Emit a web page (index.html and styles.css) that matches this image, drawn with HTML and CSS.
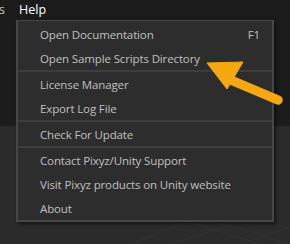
FILE: index.html
```html
<!DOCTYPE html>
<html>
<head>
<meta charset="utf-8">
<link rel="stylesheet" href="styles.css">
</head>
<body>
<div class="app">
  <div class="menubar">
    <span class="menu-item cut">s</span>
    <span class="menu-item active">Help</span>
  </div>
  <div class="panel"></div>
  <div class="viewport">
    <svg class="grid" width="290" height="117" viewBox="0 0 290 117">
      <g stroke="#333333" stroke-width="1" fill="none">
        <line x1="130" y1="117" x2="200" y2="90"/>
        <line x1="200" y1="90" x2="290" y2="117"/>
        <line x1="240" y1="117" x2="290" y2="100"/>
        <line x1="170" y1="117" x2="230" y2="98"/>
        <line x1="190" y1="95" x2="260" y2="117"/>
      </g>
    </svg>
  </div>

  <div class="dropdown">
    <div class="row"><span>Open Documentation</span><span class="key">F1</span></div>
    <div class="row"><span>Open Sample Scripts Directory</span></div>
    <div class="sep"></div>
    <div class="row"><span>License Manager</span></div>
    <div class="row"><span>Export Log File</span></div>
    <div class="sep"></div>
    <div class="row"><span>Check For Update</span></div>
    <div class="sep"></div>
    <div class="row"><span>Contact Pixyz/Unity Support</span></div>
    <div class="row"><span>Visit Pixyz products on Unity website</span></div>
    <div class="row"><span>About</span></div>
  </div>

  <svg class="arrow" width="290" height="244" viewBox="0 0 290 244">
    <g fill="#f5a812" stroke="#f5a812">
      <line x1="226" y1="78" x2="278" y2="100" stroke-width="9.5" stroke-linecap="round"/>
      <polygon points="207,63 243,62 227,89" stroke-width="1" stroke-linejoin="round"/>
    </g>
  </svg>
</div>
</body>
</html>
```

FILE: styles.css
```css
* { box-sizing: border-box; }
html, body {
  margin: 0;
  padding: 0;
  background: #1c1c1c;
  width: 290px;
  height: 244px;
  overflow: hidden;
}
.app {
  position: relative;
  width: 290px;
  height: 244px;
  display: flex;
  flex-direction: column;
  font-family: "Open Sans", "Noto Sans", sans-serif;
}
.menubar {
  height: 20px;
  display: flex;
  align-items: center;
  background: #1b1b1b;
  font-size: 12.5px;
  color: #ffffff;
}
.menu-item.cut {
  width: 20px;
  margin-left: -1px;
  color: #c8c8c8;
}
.menu-item.active {
  color: #ffffff;
}
.panel {
  height: 107px;
  background: #1c1c1c;
}
.viewport {
  flex: 1;
  background: #2b2b2b;
  border-top: 1px solid #262626;
}
.grid { display: block; }
.dropdown {
  position: absolute;
  left: 16px;
  top: 20px;
  width: 258px;
  height: 202px;
  background: #2d2d2d;
  border: 2px solid #474747;
  border-top-width: 1px;
  padding-top: 1px;
  box-shadow: 2px 2px 3px rgba(0,0,0,0.5);
  display: flex;
  flex-direction: column;
  font-size: 11.5px;
  letter-spacing: -0.13px;
  color: #c0c0c0;
}
.row {
  height: 24px;
  display: flex;
  align-items: center;
  justify-content: space-between;
  padding-left: 22px;
  padding-right: 12px;
  white-space: nowrap;
}
.key { color: #c0c0c0; }
.sep {
  height: 2px;
  background: #3d3d3d;
}
.arrow {
  position: absolute;
  left: 0;
  top: 0;
  pointer-events: none;
}
```
